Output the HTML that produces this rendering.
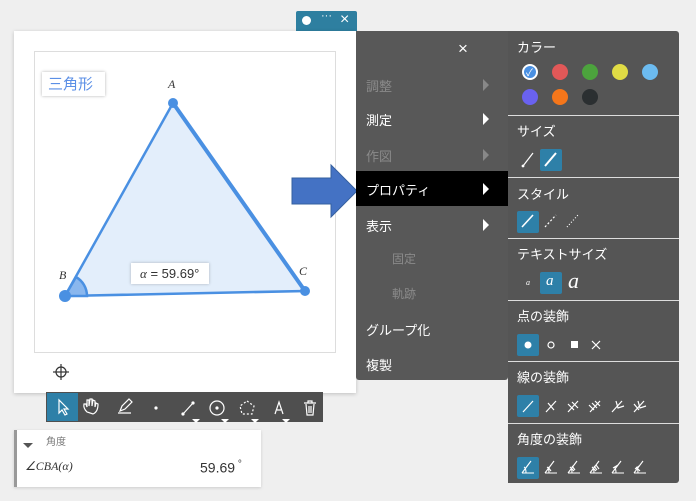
<!DOCTYPE html>
<html><head><meta charset="utf-8"><style>
*{margin:0;padding:0;box-sizing:border-box}
body{width:696px;height:501px;background:#efefef;position:relative;overflow:hidden;font-family:"Liberation Sans","Noto Sans CJK JP",sans-serif}
.a{position:absolute}
.mi{position:absolute;left:366px;font-size:13px;color:#fff}
.g{color:#8a8a8a}
.ar{position:absolute;left:483px;width:0;height:0;border-top:6px solid transparent;border-bottom:6px solid transparent;border-left:6px solid #fff}
.ar.g2{border-left-color:#888}
.h{position:absolute;left:517px;font-size:13px;color:#fff}
.sep{position:absolute;left:508px;width:171px;height:1px;background:#ddd}
.dot{position:absolute;width:16px;height:16px;border-radius:50%}
.sel{position:absolute;background:#2e80a8;border-radius:2px}
</style></head><body>
<div class="a" style="left:296px;top:11px;width:61px;height:20px;background:#2e7fa0;border-radius:2px 2px 0 0"></div>
<div class="a" style="left:302px;top:16px;width:9px;height:9px;border-radius:50%;background:#fff"></div>
<div class="a" style="left:321px;top:10px;color:#fff;font-size:11px">···</div>
<div class="a" style="left:340px;top:11px;color:#fff;font-size:16px">×</div>
<div class="a" style="left:14px;top:31px;width:342px;height:362px;background:#fff;box-shadow:0 1px 4px rgba(0,0,0,.2)"></div>
<div class="a" style="left:34px;top:51px;width:302px;height:302px;border:1px solid #ddd"></div>
<svg class="a" style="left:0;top:0" width="360" height="400">
<polygon points="173,103 65,296 305,291" fill="#e3eefb" stroke="#4a90e2" stroke-width="2.5"/>
<line x1="173" y1="103" x2="305" y2="291" stroke="#4a90e2" stroke-width="4"/>
<path d="M65,296 L87,296 A22,22 0 0 0 76,277 Z" fill="#8ab7ee" stroke="#4a90e2" stroke-width="2.5"/>
<circle cx="173" cy="103" r="5" fill="#4a90e2"/><circle cx="65" cy="296" r="6" fill="#4a90e2"/><circle cx="305" cy="291" r="5" fill="#4a90e2"/>
<text x="168" y="88" font-family="Liberation Serif" font-style="italic" font-size="12" fill="#333">A</text>
<text x="59" y="279" font-family="Liberation Serif" font-style="italic" font-size="12" fill="#333">B</text>
<text x="299" y="275" font-family="Liberation Serif" font-style="italic" font-size="12" fill="#333">C</text>
<g stroke="#333" stroke-width="1.2" fill="none"><circle cx="61" cy="372" r="5"/><line x1="53" y1="372" x2="69" y2="372"/><line x1="61" y1="364" x2="61" y2="380"/></g>
</svg>
<div class="a" style="left:42px;top:72px;width:63px;height:24px;background:#fff;box-shadow:0 0 3px rgba(0,0,0,.3);color:#5b8fe6;font-size:15px;padding:1px 0 0 6px">三角形</div>
<div class="a" style="left:131px;top:263px;width:78px;height:21px;background:#fff;box-shadow:0 0 3px rgba(0,0,0,.25);font-size:13px;color:#333;padding:3px 0 0 9px"><i style="font-family:Liberation Serif">α</i> = 59.69°</div>
<!-- arrow -->
<svg class="a" style="left:290px;top:163px" width="70" height="56"><polygon points="2,15 41,15 41,2 67,28 41,54 41,41 2,41" fill="#4472c4" stroke="#35609f" stroke-width="1"/></svg>
<!-- toolbar -->
<div class="a" style="left:46px;top:392px;width:277px;height:30px;background:#4f4f4f"></div>
<div class="sel" style="left:47px;top:393px;width:31px;height:28px;border-radius:0"></div>
<svg class="a" style="left:46px;top:392px" width="277" height="36" fill="none" stroke="#fff" stroke-width="1.2">
<path d="M13,8 L13,21 L16,18 L19,23 L21,22 L18,17 L22,17 Z"/>
<path d="M41,20 Q37,16 38,12 L40,12 L41,15 L41,8 L43,8 L43,14 L44,7 L46,7 L46,14 L47,8 L49,9 L49,15 L50,11 L52,12 Q52,20 47,22 Z"/>
<path d="M72,21 L85,21 M74,19 L76,14 L83,7 L86,10 L79,17 Z" stroke-dasharray="0"/>
<circle cx="110" cy="16" r="1.6" fill="#fff" stroke="none"/>
<path d="M137,22 L147,11"/><circle cx="137" cy="22" r="1" fill="#fff"/><circle cx="147" cy="11" r="1" fill="#fff"/>
<circle cx="171" cy="16" r="7"/><circle cx="171" cy="16" r="1" fill="#fff"/>
<path d="M201,9 L208,14 L206,22 L196,22 L194,14 Z" stroke-dasharray="2 2"/>
<path d="M229,22 L233,10 L237,22 M231,18 L235,18"/>
<path d="M258,11 L270,11 M262,11 L262,9 L266,9 L266,11 M260,12 L261,23 L267,23 L268,12 M263,14 L263,21 M265,14 L265,21"/>
<g fill="#fff" stroke="none"><polygon points="146,27 154,27 150,31"/><polygon points="175,27 183,27 179,31"/><polygon points="205,27 213,27 209,31"/><polygon points="236,27 244,27 240,31"/></g>
</svg>
<!-- bottom panel -->
<div class="a" style="left:14px;top:430px;width:247px;height:57px;background:#fff;border-left:3px solid #999;box-shadow:0 1px 3px rgba(0,0,0,.15)"></div>
<div class="a" style="left:23px;top:443px;width:0;height:0;border-left:5px solid transparent;border-right:5px solid transparent;border-top:5px solid #555"></div>
<div class="a" style="left:46px;top:433px;font-size:10px;color:#777">角度</div>
<div class="a" style="left:25px;top:459px;font-size:12px;color:#333;font-family:'Liberation Serif';font-style:italic">∠CBA(α)</div>
<div class="a" style="left:200px;top:459px;font-size:14px;color:#333">59.69<sup style="font-size:10px"> °</sup></div>
<!-- menu -->
<div class="a" style="left:356px;top:31px;width:152px;height:349px;background:#585858;border-radius:0 0 3px 3px"></div>
<div class="a" style="left:356px;top:171px;width:152px;height:35px;background:#000"></div>
<div class="a" style="left:458px;top:39px;color:#fff;font-size:17px">×</div>
<div class="mi g" style="top:76px">調整</div><div class="ar g2" style="top:79px"></div>
<div class="mi" style="top:110px">測定</div><div class="ar" style="top:113px"></div>
<div class="mi g" style="top:146px">作図</div><div class="ar g2" style="top:149px"></div>
<div class="mi" style="top:180px">プロパティ</div><div class="ar" style="top:183px"></div>
<div class="mi" style="top:216px">表示</div><div class="ar" style="top:219px"></div>
<div class="mi g" style="top:250px;left:392px;font-size:12px">固定</div>
<div class="mi g" style="top:285px;left:392px;font-size:12px">軌跡</div>
<div class="mi" style="top:320px">グループ化</div>
<div class="mi" style="top:355px">複製</div>
<!-- right panel -->
<div class="a" style="left:508px;top:31px;width:171px;height:452px;background:#555;border-radius:0 3px 3px 0"></div>
<div class="sep" style="top:115px"></div><div class="sep" style="top:177px"></div><div class="sep" style="top:238px"></div><div class="sep" style="top:300px"></div><div class="sep" style="top:361px"></div><div class="sep" style="top:423px"></div>
<div class="h" style="top:37px">カラー</div>
<div class="dot" style="left:522px;top:64px;background:#fff"></div><div class="dot" style="left:524px;top:66px;width:12px;height:12px;background:#4a90e2"></div>
<div class="a" style="left:526px;top:64px;color:#fff;font-size:10px">✓</div>
<div class="dot" style="left:552px;top:64px;background:#e25858"></div>
<div class="dot" style="left:582px;top:64px;background:#4ca33d"></div>
<div class="dot" style="left:612px;top:64px;background:#e0dc45"></div>
<div class="dot" style="left:642px;top:64px;background:#6cbbf0"></div>
<div class="dot" style="left:522px;top:89px;background:#6a62f0"></div>
<div class="dot" style="left:552px;top:89px;background:#f5761a"></div>
<div class="dot" style="left:582px;top:89px;background:#2b2f31"></div>
<div class="h" style="top:121px">サイズ</div>
<div class="sel" style="left:540px;top:149px;width:22px;height:22px"></div>
<div class="h" style="top:184px">スタイル</div>
<div class="sel" style="left:517px;top:211px;width:22px;height:22px"></div>
<div class="h" style="top:244px">テキストサイズ</div>
<div class="sel" style="left:540px;top:272px;width:22px;height:22px"></div>
<div class="a" style="left:526px;top:278px;color:#fff;font-size:8px;font-family:'Liberation Serif';font-style:italic">a</div>
<div class="a" style="left:546px;top:273px;color:#fff;font-size:15px;font-family:'Liberation Serif';font-style:italic">a</div>
<div class="a" style="left:568px;top:268px;color:#fff;font-size:22px;font-family:'Liberation Serif';font-style:italic">a</div>
<div class="h" style="top:306px">点の装飾</div>
<div class="sel" style="left:517px;top:334px;width:22px;height:22px"></div>
<div class="h" style="top:367px">線の装飾</div>
<div class="sel" style="left:517px;top:395px;width:22px;height:22px"></div>
<div class="h" style="top:429px">角度の装飾</div>
<div class="sel" style="left:517px;top:457px;width:22px;height:22px"></div>
<svg class="a" style="left:508px;top:0" width="171" height="490" fill="none" stroke="#fff" stroke-width="1.2">
<path d="M15,166 L25,153" stroke-dasharray="0"/><circle cx="15" cy="166" r=".8" fill="#fff"/>
<path d="M37,166 L48,153" stroke-width="2"/>
<path d="M14,227 L25,215" stroke-width="1.6"/>
<path d="M37,227 L48,215" stroke-dasharray="2 2"/><path d="M59,227 L70,215" stroke-dasharray="1 2"/>
<circle cx="20" cy="345" r="3.5" fill="#fff" stroke="none"/>
<circle cx="43" cy="345" r="3"/>
<rect x="63" y="341" width="7" height="7" fill="#fff" stroke="none"/>
<path d="M84,341 L92,349 M92,341 L84,349"/>
<path d="M15,412 L25,401"/>
<path d="M38,412 L48,401 M40,403 L46,410"/>
<path d="M60,412 L70,401 M60,404 L66,410 M64,402 L70,408"/>
<path d="M82,412 L92,401 M81,405 L86,410 M84,403 L89,408 M87,401 L92,406"/>
<path d="M104,412 L114,401 M108,401 L110,408 L116,406"/>
<path d="M126,412 L136,401 M130,401 L132,408 L138,406 M126,404 L131,410"/>
<g stroke-width="1.1">
<path d="M14,473 L26,473 M14,473 L23,461 M18,473 Q18,468 16,467"/>
<path d="M37,473 L49,473 M37,473 L46,461 M41,473 Q41,468 39,467 M40,467 L43,471"/>
<path d="M60,473 L72,473 M60,473 L69,461 M64,473 Q64,468 62,467 M62,467 L66,471 M64,466 L67,470"/>
<path d="M82,473 L94,473 M82,473 L91,461 M86,473 Q86,468 84,467 M84,467 L88,471 M86,466 L89,470 M88,465 L91,469"/>
<path d="M104,473 L116,473 M104,473 L113,461 M108,473 Q108,468 106,467 M105,468 L110,465"/>
<path d="M126,473 L138,473 M126,473 L135,461 M130,473 Q130,468 128,467 M128,467 L132,471 M127,469 L131,466"/>
</g>
</svg>
</body></html>
